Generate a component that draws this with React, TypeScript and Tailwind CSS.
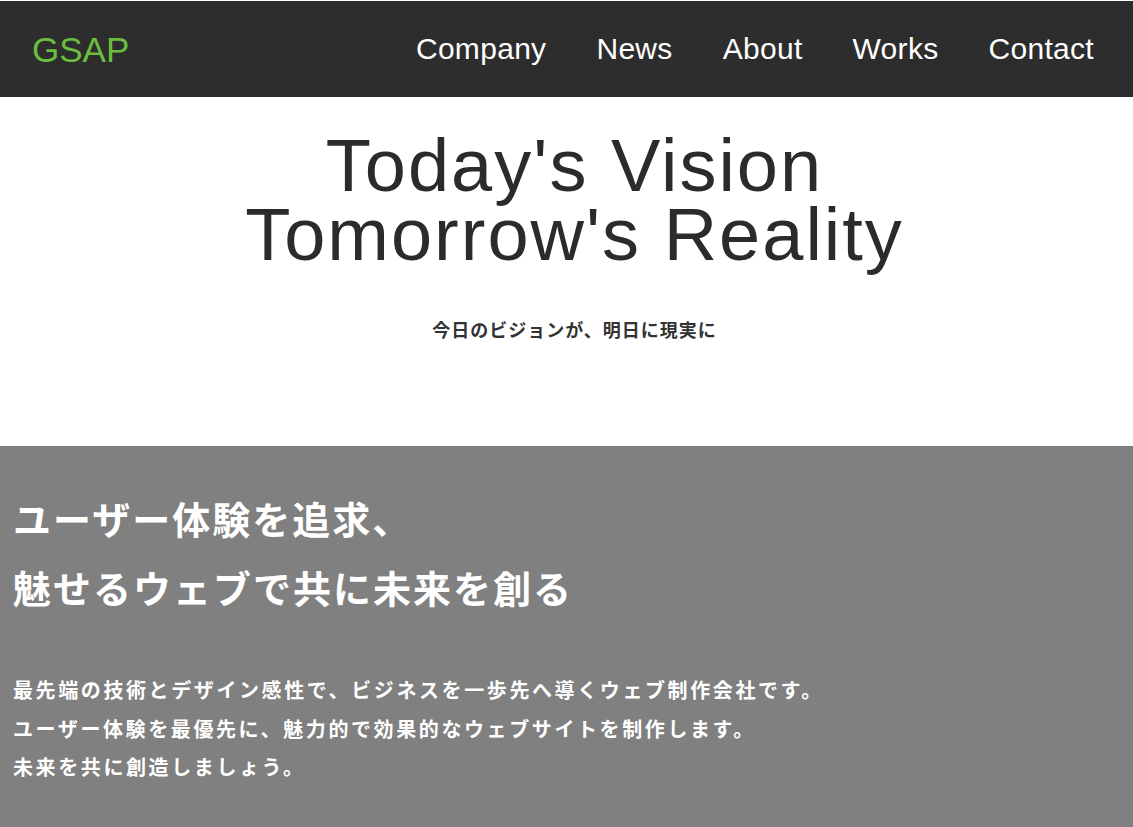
import React from "react";

const sans = "font-['Liberation_Sans','Noto_Sans_CJK_JP',sans-serif]";
const jp = "font-['Noto_Sans_CJK_JP',sans-serif]";

export default function App() {
  const links = ["Company", "News", "About", "Works", "Contact"];
  return (
    <div className={`${sans} bg-white min-h-screen pt-px`}>
      <header className="h-[96px] bg-[#2d2d2d] flex items-center justify-between pl-[32px] pr-[39px]">
        <div className="text-[35px] text-[#6cbd3d] leading-none">GSAP</div>
        <nav className="flex items-center gap-[50px]">
          {links.map((l) => (
            <a key={l} className="text-white text-[30px] leading-none tracking-[0.3px]">
              {l}
            </a>
          ))}
        </nav>
      </header>

      <section className="h-[349px] pt-[34px] pl-4 flex flex-col items-center text-[#2b2b2b]">
        <h1 className="text-[74px] leading-[69px] tracking-[2px] text-center font-normal">
          Today's Vision
          <br />
          Tomorrow's Reality
        </h1>
        <p className={`${jp} mt-[47px] text-[18px] font-bold tracking-[1px] text-[#333]`}>
          今日のビジョンが、明日に現実に
        </p>
      </section>

      <section className={`${jp} bg-[#808080] text-white pl-[13px] pt-[37px] pb-[60px]`}>
        <h2 className="text-[38px] leading-[69px] tracking-[2px] font-bold">
          ユーザー体験を追求、
          <br />
          魅せるウェブで共に未来を創る
        </h2>
        <p className="mt-[50px] text-[20px] leading-[38.5px] tracking-[2.6px] font-bold">
          最先端の技術とデザイン感性で、ビジネスを一歩先へ導くウェブ制作会社です。
          <br />
          ユーザー体験を最優先に、魅力的で効果的なウェブサイトを制作します。
          <br />
          未来を共に創造しましょう。
        </p>
      </section>
    </div>
  );
}
